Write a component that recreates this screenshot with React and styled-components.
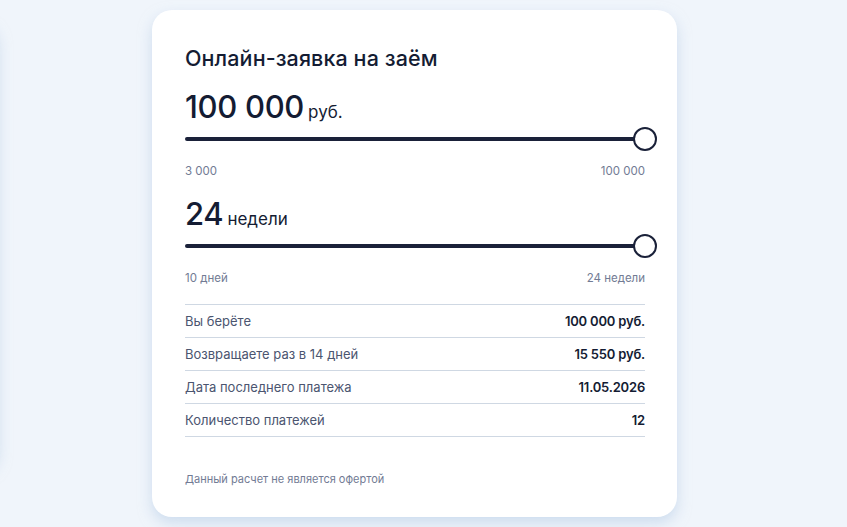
import React from "react";
import styled, { createGlobalStyle } from "styled-components";

const Global = createGlobalStyle`
  html, body { margin: 0; padding: 0; }
  body { background: #f0f5fb; font-family: "Inter", "Noto Sans", sans-serif; }
`;

const Page = styled.div`
  width: 847px;
  height: 527px;
  overflow: hidden;
  display: flex;
  align-items: flex-start;
  gap: 154px;
  padding-top: 10px;
  box-sizing: border-box;
  background: #f0f5fb;
`;

const Card = styled.div`
  flex: none;
  width: 525px;
  height: 507px;
  box-sizing: border-box;
  background: #fff;
  border-radius: 20px;
  box-shadow: 0 6px 14px rgba(176, 200, 228, 0.55);
  padding: 34px 32px 0 33px;
  display: flex;
  flex-direction: column;
`;

const PeekCard = styled(Card)`
  margin-left: -527px;
  margin-top: 10px;
  height: 448px;
  padding: 0;
`;

const Title = styled.h1`
  margin: 0;
  font-size: 21.5px;
  line-height: 28px;
  font-weight: 500;
  color: #141c33;
  letter-spacing: 0.1px;
`;

const ValueLine = styled.div`
  display: flex;
  align-items: baseline;
  gap: 4px;
  margin-top: ${p => p.$mt}px;
  color: #141c33;
`;

const BigValue = styled.span`
  font-size: 31px;
  line-height: 36px;
  font-weight: 500;
  letter-spacing: -0.3px;
`;

const Unit = styled.span`
  font-size: 17px;
  font-weight: 400;
`;

const SliderWrap = styled.div`
  position: relative;
  height: 24px;
  margin-top: 2px;
  display: flex;
  align-items: center;
`;

const Track = styled.div`
  flex: 1;
  height: 4px;
  border-radius: 2px;
  background: #1a2139;
`;

const Thumb = styled.div`
  position: absolute;
  right: -12px;
  top: 0;
  width: 20px;
  height: 20px;
  border-radius: 50%;
  background: #fff;
  border: 2px solid #1a2139;
`;

const RangeLabels = styled.div`
  display: flex;
  justify-content: space-between;
  margin-top: 13px;
  font-size: 11.5px;
  line-height: 14px;
  color: #727b94;
`;

const Table = styled.div`
  margin-top: 19px;
  border-top: 1px solid #cfd8e3;
`;

const Row = styled.div`
  display: flex;
  justify-content: space-between;
  align-items: center;
  height: 32px;
  border-bottom: 1px solid #cfd8e3;
  font-size: 13px;
`;

const RowLabel = styled.span`
  color: #4b5570;
`;

const RowValue = styled.span`
  color: #141c33;
  font-weight: 600;
  font-size: 13px;
  letter-spacing: -0.2px;
`;

const Note = styled.p`
  margin: 35px 0 0;
  font-size: 11px;
  color: #727b94;
`;

const rows = [
  ["Вы берёте", "100 000 руб."],
  ["Возвращаете раз в 14 дней", "15 550 руб."],
  ["Дата последнего платежа", "11.05.2026"],
  ["Количество платежей", "12"],
];

function Slider() {
  return (
    <SliderWrap>
      <Track />
      <Thumb />
    </SliderWrap>
  );
}

export default function App() {
  return (
    <>
      <Global />
      <Page>
        <PeekCard />
        <Card>
          <Title>Онлайн-заявка на заём</Title>
          <ValueLine $mt={17}>
            <BigValue>100 000</BigValue>
            <Unit>руб.</Unit>
          </ValueLine>
          <Slider />
          <RangeLabels>
            <span>3 000</span>
            <span>100 000</span>
          </RangeLabels>
          <ValueLine $mt={18}>
            <BigValue>24</BigValue>
            <Unit>недели</Unit>
          </ValueLine>
          <Slider />
          <RangeLabels>
            <span>10 дней</span>
            <span>24 недели</span>
          </RangeLabels>
          <Table>
            {rows.map(([l, v]) => (
              <Row key={l}>
                <RowLabel>{l}</RowLabel>
                <RowValue>{v}</RowValue>
              </Row>
            ))}
          </Table>
          <Note>Данный расчет не является офертой</Note>
        </Card>
      </Page>
    </>
  );
}
